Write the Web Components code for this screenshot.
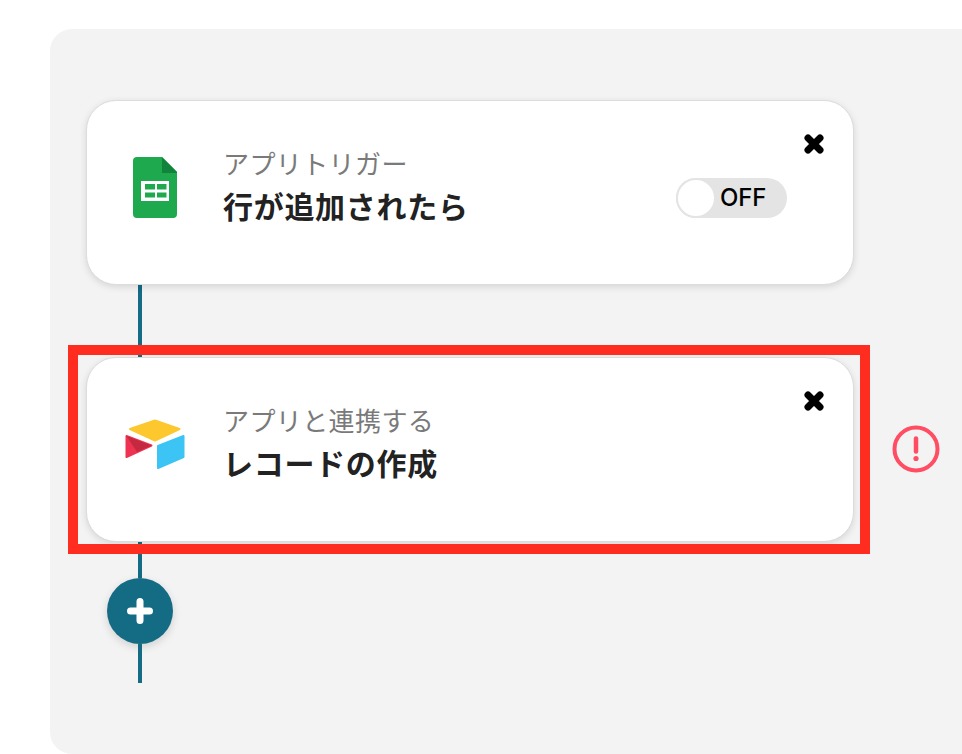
<!DOCTYPE html>
<html lang="ja">
<head>
<meta charset="utf-8">
<title>flow</title>
<style>
  html, body { margin: 0; height: 100%; background: #fff; overflow: hidden; }
  body { font-family: "Noto Sans CJK JP", "Noto Sans", sans-serif; }
</style>
</head>
<body>
<template id="flow-panel-template">
  <style>
    :host {
      display: block;
      box-sizing: border-box;
      width: 950px;
      height: 725px;
      margin: 29px 0 0 50px;
      padding: 71px 0 0 36px;
      background: #f3f3f3;
      border-radius: 22px;
    }
  </style>
  <slot></slot>
</template>

<template id="flow-card-template">
  <style>
    :host {
      display: block;
      position: relative;
      box-sizing: border-box;
      width: 768px;
      height: 185px;
      background: #fff;
      border: 1px solid #dcdcdc;
      border-radius: 30px;
      box-shadow: 0 2px 7px rgba(0, 0, 0, .12);
    }
    .row {
      display: flex;
      align-items: center;
      height: 100%;
      box-sizing: border-box;
      padding: 0 66px 10px 38px;
    }
    .icon { display: flex; justify-content: center; width: 60px; margin-right: 38px; }
    .texts { display: flex; flex-direction: column; flex: 1; margin-top: -3px; }
    .sub { font-size: 26px; line-height: 34px; margin-bottom: 3px; letter-spacing: .4px; color: #7a7a7a; }
    .title { font-size: 30px; line-height: 44px; letter-spacing: .7px; font-weight: 700; color: #222; }
    .close { position: absolute; top: 32px; right: 28px; width: 22px; height: 22px; }
  </style>
  <div class="row">
    <div class="icon"><slot name="icon"></slot></div>
    <div class="texts">
      <span class="sub"><slot name="sub"></slot></span>
      <span class="title"><slot name="title"></slot></span>
    </div>
    <slot name="extra"></slot>
  </div>
  <svg class="close" viewBox="0 0 22 22">
    <path d="M5 5 17 17M17 5 5 17" stroke="#000" stroke-width="7" stroke-linecap="round" fill="none"/>
  </svg>
</template>

<template id="flow-toggle-template">
  <style>
    :host {
      display: flex;
      align-items: center;
      box-sizing: border-box;
      width: 111px;
      height: 40px;
      border-radius: 20px;
      background: #e4e4e4;
      margin-top: 20px;
    }
    .knob {
      box-sizing: border-box;
      width: 40px;
      height: 40px;
      border-radius: 50%;
      background: #fff;
      border: 2px solid #e4e4e4;
    }
    .label {
      margin-left: 4px;
      font: 500 24px/40px "Inter", "Liberation Sans", sans-serif;
      letter-spacing: -.2px;
      color: #000;
    }
  </style>
  <span class="knob"></span>
  <span class="label"><slot></slot></span>
</template>

<template id="flow-line-template">
  <style>
    :host {
      display: block;
      width: 4px;
      height: var(--len, 72px);
      margin-left: 52px;
      background: #146b84;
    }
  </style>
</template>

<template id="add-button-template">
  <style>
    :host {
      display: flex;
      align-items: center;
      justify-content: center;
      width: 66px;
      height: 66px;
      margin-left: 21px;
      border-radius: 50%;
      background: #146b84;
      box-shadow: 0 3px 8px rgba(0, 0, 0, .14);
    }
    svg { width: 28px; height: 28px; }
  </style>
  <svg viewBox="0 0 28 28">
    <path d="M4.5 14h19M14 4.5v19" stroke="#fff" stroke-width="7" stroke-linecap="round" fill="none"/>
  </svg>
</template>

<template id="warn-icon-template">
  <style>
    :host { display: block; position: absolute; left: 892px; top: 425px; width: 48px; height: 48px; }
    svg { display: block; width: 48px; height: 48px; }
  </style>
  <svg viewBox="0 0 48 48">
    <circle cx="24" cy="24" r="21.5" fill="none" stroke="#ff4d63" stroke-width="4"/>
    <path d="M24 13.5v13" stroke="#ff4d63" stroke-width="4.5" stroke-linecap="round"/>
    <circle cx="24" cy="33.5" r="2.6" fill="#ff4d63"/>
  </svg>
</template>

<template id="red-frame-template">
  <style>
    :host {
      display: block;
      position: absolute;
      left: 68px;
      top: 345px;
      box-sizing: border-box;
      width: 802px;
      height: 209px;
      border: 10px solid #ff2d20;
      pointer-events: none;
    }
  </style>
</template>

<flow-panel>
  <flow-card>
    <svg slot="icon" width="44" height="61" viewBox="0 0 44 61" style="display:block">
      <path d="M4 0H29L44 15V57a4 4 0 0 1-4 4H4a4 4 0 0 1-4-4V4a4 4 0 0 1 4-4Z" fill="#1ea94f"/>
      <path d="M29 0 44 15V16H29Z" fill="#12833b"/>
      <rect x="8" y="24" width="28" height="20" fill="#fff"/>
      <rect x="12" y="27" width="10" height="5.5" fill="#1ea94f"/>
      <rect x="24" y="27" width="9.5" height="5.5" fill="#1ea94f"/>
      <rect x="12" y="35.5" width="10" height="5" fill="#1ea94f"/>
      <rect x="24" y="35.5" width="9.5" height="5" fill="#1ea94f"/>
    </svg>
    <span slot="sub">アプリトリガー</span>
    <span slot="title">行が追加されたら</span>
    <flow-toggle slot="extra">OFF</flow-toggle>
  </flow-card>
  <flow-line></flow-line>
  <flow-card>
    <svg slot="icon" width="60" height="51" viewBox="0 0 60 51" style="display:block">
      <path d="M30 1.5 54.5 10 30 21.5 5 10Z" fill="#fcc82e" stroke="#fcc82e" stroke-width="2" stroke-linejoin="round"/>
      <path d="M33 27 58.5 17V38L33 49Z" fill="#3bc4f4" stroke="#3bc4f4" stroke-width="2" stroke-linejoin="round"/>
      <path d="M1.5 17 26.5 26.5 1.5 38Z" fill="#ee3352" stroke="#ee3352" stroke-width="2" stroke-linejoin="round"/>
      <path d="M1.5 17 26.5 26.5 12 33Z" fill="#c4293f"/>
    </svg>
    <span slot="sub">アプリと連携する</span>
    <span slot="title">レコードの作成</span>
  </flow-card>
  <flow-line style="--len:36px"></flow-line>
  <add-button></add-button>
  <flow-line style="--len:39px"></flow-line>
</flow-panel>
<red-frame></red-frame>
<warn-icon></warn-icon>

<script>
  // all elements just clone their template into an open shadow root
  ['flow-panel', 'flow-card', 'flow-toggle', 'flow-line', 'add-button', 'warn-icon', 'red-frame'].forEach((name) => {
    const template = document.getElementById(name + '-template');
    customElements.define(name, class extends HTMLElement {
      constructor() {
        super();
        this.attachShadow({ mode: 'open' });
        this.shadowRoot.appendChild(template.content.cloneNode(true));
      }
    });
  });
</script>
</body>
</html>
